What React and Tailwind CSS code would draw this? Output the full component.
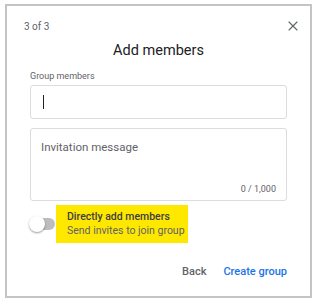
import { X } from 'lucide-react';

const App = () => {
  return (
    <div className="w-[317px] h-[304px] bg-white pt-[4px] pl-[5px] font-['Roboto',sans-serif]">
      <div className="w-[307px] h-[294px] border-2 border-[#c4c4c4] bg-white flex flex-col">
        <div className="flex items-center justify-between pl-[17px] pr-[9px] pt-[10px] h-[30px]">
          <span className="text-[10px] text-[#5f6368]">3 of 3</span>
          <X size={16} strokeWidth={1.6} className="text-[#5f6368]" />
        </div>
        <h2 className="text-center text-[14.5px] text-[#202124] mt-[5px] leading-[20px]">Add members</h2>

        <div className="px-[23px] mt-[9px]">
          <label className="block text-[9px] text-[#5f6368] leading-[12px]">Group members</label>
          <div className="mt-[3px] h-[34px] border border-[#dadce0] rounded-[3px] flex items-center pl-[12px]">
            <span className="w-px h-[14px] bg-[#202124]"></span>
          </div>

          <div className="mt-[9px] h-[73px] border border-[#dadce0] rounded-[3px] relative">
            <p className="pl-[10px] pt-[10px] text-[11.5px] text-[#5f6368] leading-[16px]">Invitation message</p>
            <span className="absolute right-[10px] bottom-[4px] text-[9px] text-[#5f6368]">0 / 1,000</span>
          </div>
        </div>

        <div className="flex items-center pl-[22px] mt-[4px]">
          <div className="relative w-[27px] h-[16px] flex items-center">
            <div className="absolute left-[6px] w-[20px] h-[12px] rounded-full bg-[#bdbdbd]"></div>
            <div className="absolute left-0 w-[16px] h-[16px] rounded-full bg-white shadow-[0_1px_2px_rgba(0,0,0,0.4)]"></div>
          </div>
          <div className="bg-[#ffe800] w-[132px] h-[38px] flex flex-col justify-center pl-[11px] whitespace-nowrap">
            <span className="text-[10.5px] text-[#3c4043] font-medium leading-[14px]">Directly add members</span>
            <span className="text-[10.5px] text-[#5f6368] leading-[14px]">Send invites to join group</span>
          </div>
        </div>

        <div className="flex justify-end items-center gap-[17px] pr-[23px] mt-[21px]">
          <span className="text-[11px] text-[#5f6368] font-medium">Back</span>
          <span className="text-[11px] text-[#1a73e8] font-medium">Create group</span>
        </div>
      </div>
    </div>
  );
};

export default App;
